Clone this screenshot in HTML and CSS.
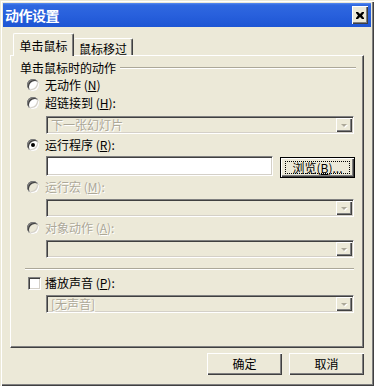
FILE: index.html
```html
<!DOCTYPE html>
<html lang="zh-CN">
<head>
<meta charset="utf-8">
<title>动作设置</title>
<link rel="stylesheet" href="styles.css">
</head>
<body>
<div class="window">
  <div class="titlebar">
    <span class="title">动作设置</span>
    <span class="close">
      <svg width="8" height="7" viewBox="0 0 8 7"><path d="M0 0h2l2 2 2-2h2v1l-2 2.5 2 2.5v1h-2l-2-2-2 2h-2v-1l2-2.5-2-2.5z" fill="#000"/></svg>
    </span>
  </div>
  <div class="client">
    <div class="tabs">
      <div class="tab active">单击鼠标</div>
      <div class="tab">鼠标移过</div>
    </div>
    <div class="panel">
      <div class="group-head"><span>单击鼠标时的动作</span><i class="etch"></i></div>
      <div class="opt r1"><span class="radio"></span><span class="lbl">无动作 (<u>N</u>)</span></div>
      <div class="opt"><span class="radio"></span><span class="lbl">超链接到 (<u>H</u>):</span></div>
      <div class="combo c1"><span class="ctext">下一张幻灯片</span><span class="cbtn"><i class="tri"></i></span></div>
      <div class="opt r3"><span class="radio checked"></span><span class="lbl">运行程序 (<u>R</u>):</span></div>
      <div class="prog-row">
        <div class="input"></div>
        <div class="browse"><span class="focus">浏览(<u>B</u>)...</span></div>
      </div>
      <div class="opt r4 disabled"><span class="radio off"></span><span class="lbl">运行宏 (<u>M</u>):</span></div>
      <div class="combo c2"><span class="ctext"></span><span class="cbtn"><i class="tri"></i></span></div>
      <div class="opt r5 disabled"><span class="radio off"></span><span class="lbl">对象动作 (<u>A</u>):</span></div>
      <div class="combo c3"><span class="ctext"></span><span class="cbtn"><i class="tri"></i></span></div>
      <div class="sep"></div>
      <div class="opt chk-row"><span class="check"></span><span class="lbl">播放声音 (<u>P</u>):</span></div>
      <div class="combo c4"><span class="ctext">[无声音]</span><span class="cbtn"><i class="tri"></i></span></div>
    </div>
    <div class="buttons">
      <div class="btn">确定</div>
      <div class="btn">取消</div>
    </div>
  </div>
</div>
</body>
</html>
```
FILE: styles.css
```css
html, body {
  margin: 0;
  padding: 0;
  background: #ece9d8;
}
body {
  font-family: "Noto Sans CJK SC", "Liberation Sans", sans-serif;
  font-size: 12px;
  color: #000;
}
.window {
  width: 374px;
  height: 386px;
  box-sizing: border-box;
  padding: 3px;
  background: #ece9d8;
  box-shadow: inset 1px 1px 0 #ece9d8, inset 2px 2px 0 #fff, inset -1px -1px 0 #404040, inset -2px -2px 0 #808080;
  display: flex;
  flex-direction: column;
}
.titlebar {
  height: 24px;
  flex: none;
  display: flex;
  align-items: center;
  justify-content: space-between;
  padding: 0 3px 0 2px;
  background: linear-gradient(#5a8cf0 0, #2f68e0 2px, #2860dc 50%, #1d55d4 100%);
}
.title {
  color: #fff;
  font-weight: bold;
  font-size: 14px;
  line-height: 16px;
  letter-spacing: -0.5px;
}
.close {
  width: 16px;
  height: 18px;
  box-sizing: border-box;
  background: #ece9d8;
  box-shadow: inset 1px 1px 0 #fff, inset -1px -1px 0 #404040, inset -2px -2px 0 #808080;
  display: flex;
  align-items: center;
  justify-content: center;
  padding-right: 1px;
}
.client {
  flex: 1;
  display: flex;
  flex-direction: column;
  padding: 6px 7px 8px 7px;
}
.tabs {
  height: 22px;
  display: flex;
  align-items: flex-end;
  padding-left: 3px;
  position: relative;
  z-index: 1;
}
.tab {
  box-sizing: border-box;
  border-top: 1px solid #fff;
  border-left: 1px solid #fff;
  border-right: 1px solid #404040;
  box-shadow: inset -1px 0 0 #808080;
  border-radius: 2px 2px 0 0;
  background: #ece9d8;
  line-height: 14px;
  text-align: center;
}
.tab.active {
  width: 61px;
  height: 23px;
  margin-bottom: -1px;
  padding-top: 5px;
}
.tab:not(.active) {
  width: 59px;
  height: 17px;
  padding-top: 3px;
  border-left: none;
}
.panel {
  height: 293px;
  box-sizing: border-box;
  border: 1px solid;
  border-color: #fff #404040 #404040 #fff;
  box-shadow: inset -1px -1px 0 #808080;
  padding-top: 5px;
  display: flex;
  flex-direction: column;
}
.group-head {
  height: 13px;
  display: flex;
  align-items: center;
  padding-left: 9px;
  padding-right: 7px;
  line-height: 13px;
}
.etch {
  flex: 1;
  height: 0;
  border-top: 1px solid #aca899;
  border-bottom: 1px solid #fff;
  margin-left: 4px;
  margin-top: 1px;
}
.opt {
  height: 18px;
  display: flex;
  align-items: center;
  padding-left: 16px;
  line-height: 14px;
}
.opt.r1 { margin-top: 2px; }
.opt.r3 { margin-top: 2px; }
.opt.r4 { margin-top: 1px; }
.opt.r5 { margin-top: 2px; }
.lbl { margin-left: 6px; }
.disabled .lbl {
  color: #aca899;
  text-shadow: 1px 1px 0 #fff;
}
.radio {
  width: 12px;
  height: 12px;
  border-radius: 50%;
  background: #fff;
  box-shadow: inset 1px 1px 0 #808080, inset -1px -1px 0 #fff, inset 2px 2px 0 #404040, inset -2px -2px 0 #d4d0c8;
  position: relative;
  flex: none;
}
.radio.off { background: #ece9d8; }
.radio.checked::after {
  content: "";
  position: absolute;
  left: 4px;
  top: 4px;
  width: 4px;
  height: 4px;
  border-radius: 50%;
  background: #000;
}
.check {
  width: 13px;
  height: 13px;
  box-sizing: border-box;
  background: #fff;
  border: 1px solid;
  border-color: #808080 #fff #fff #808080;
  box-shadow: inset 1px 1px 0 #404040, inset -1px -1px 0 #d4d0c8;
  flex: none;
}
.chk-row { padding-left: 17px; margin-top: 4px; }
.chk-row .lbl { margin-left: 4px; }
.combo {
  width: 308px;
  height: 18px;
  box-sizing: border-box;
  margin-left: 35px;
  border: 1px solid;
  border-color: #808080 #fff #fff #808080;
  box-shadow: inset 1px 1px 0 #404040, inset -1px -1px 0 #d4d0c8;
  background: #ece9d8;
  display: flex;
  align-items: stretch;
  padding: 1px;
}
.c1 { margin-top: 4px; }
.c2 { margin-top: 3px; }
.c3 { margin-top: 3px; }
.c4 { margin-top: 3px; }
.ctext {
  flex: 1;
  color: #aca899;
  text-shadow: 1px 1px 0 #fff;
  padding-left: 3px;
  line-height: 14px;
}
.cbtn {
  width: 16px;
  background: #ece9d8;
  box-shadow: inset 1px 1px 0 #fff, inset -1px -1px 0 #404040, inset -2px -2px 0 #808080;
  display: flex;
  align-items: center;
  justify-content: center;
}
.tri {
  width: 0;
  height: 0;
  border-left: 3px solid transparent;
  border-right: 3px solid transparent;
  border-top: 3px solid #aca899;
  filter: drop-shadow(1px 1px 0 #fff);
}
.prog-row {
  display: flex;
  align-items: flex-start;
  margin-top: 2px;
  margin-left: 35px;
  height: 21px;
}
.input {
  width: 227px;
  height: 20px;
  box-sizing: border-box;
  background: #fff;
  border: 1px solid;
  border-color: #808080 #fff #fff #808080;
  box-shadow: inset 1px 1px 0 #404040, inset -1px -1px 0 #d4d0c8;
}
.browse {
  width: 75px;
  height: 21px;
  box-sizing: border-box;
  margin-left: 7px;
  margin-top: 1px;
  border: 1px solid #000;
  background: #ece9d8;
  box-shadow: inset 1px 1px 0 #fff, inset -1px -1px 0 #404040, inset -2px -2px 0 #808080;
  padding: 3px 4px;
  display: flex;
}
.focus {
  flex: 1;
  border: 1px dotted #000;
  display: flex;
  align-items: center;
  justify-content: center;
  line-height: 11px;
}
.sep {
  height: 0;
  border-top: 1px solid #aca899;
  border-bottom: 1px solid #fff;
  margin: 10px 9px 0 14px;
}
.buttons {
  margin-top: 5px;
  display: flex;
  justify-content: flex-end;
  gap: 7px;
  padding-right: 0;
}
.btn {
  width: 75px;
  height: 22px;
  box-sizing: border-box;
  background: #ece9d8;
  box-shadow: inset 1px 1px 0 #fff, inset -1px -1px 0 #404040, inset -2px -2px 0 #808080;
  display: flex;
  align-items: center;
  justify-content: center;
  line-height: 14px;
}
```
